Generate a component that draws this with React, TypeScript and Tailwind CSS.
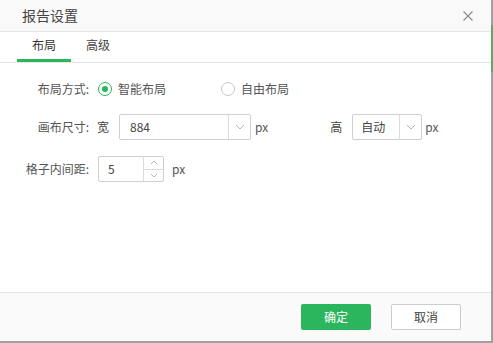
import React from 'react';

const font = { fontFamily: '"Noto Sans CJK SC", "Noto Sans", sans-serif' };

const Chevron = () => (
  <svg width="10" height="6" viewBox="0 0 10 6" fill="none" stroke="#b5b5b5" strokeWidth="1">
    <path d="M1 1l4 4 4-4" />
  </svg>
);

const Radio = ({ checked }: { checked?: boolean }) => (
  <span
    className={
      'flex h-[14px] w-[14px] items-center justify-center rounded-full border ' +
      (checked ? 'border-[#2bb55d]' : 'border-[#c8c8c8]')
    }
  >
    {checked && <span className="h-[6px] w-[6px] rounded-full bg-[#2bb55d]" />}
  </span>
);

export default function App() {
  return (
    <div className="flex h-[343px] w-[493px] flex-col bg-white text-[12px] text-[#555]" style={font}>
      <div className="flex flex-1">
        <div className="flex w-[491px] flex-col">
          {/* header */}
          <div className="flex h-[32px] items-center justify-between border-b border-[#e6e6e6] bg-[#f9f9f9] pl-[22px] pr-[18px]">
            <span className="text-[14px] text-[#444]">报告设置</span>
            <svg width="10" height="10" viewBox="0 0 10 10" stroke="#8a8a8a" strokeWidth="1.1">
              <path d="M0.5 0.5l9 9M9.5 0.5l-9 9" />
            </svg>
          </div>

          {/* tabs */}
          <div className="flex h-[31px] border-b border-[#e6e6e6] pl-[17px]">
            <div className="flex w-[54px] flex-col items-center">
              <span className="flex flex-1 items-center pb-[1px] text-[12px] text-[#333]">布局</span>
              <span className="h-[3px] w-full bg-[#2bb55d]" />
            </div>
            <div className="flex w-[54px] items-center justify-center pb-[4px] text-[12px] text-[#444]">高级</div>
          </div>

          {/* body */}
          <div className="flex flex-1 flex-col pt-[14px]">
            <div className="flex h-[24px] items-center">
              <span className="w-[89px] text-right">布局方式:</span>
              <div className="ml-[9px] flex items-center gap-[6px]">
                <Radio checked />
                <span>智能布局</span>
              </div>
              <div className="ml-[55px] flex items-center gap-[6px]">
                <Radio />
                <span>自由布局</span>
              </div>
            </div>

            <div className="mt-[13px] flex h-[26px] items-center">
              <span className="w-[89px] text-right">画布尺寸:</span>
              <span className="ml-[8px] text-[#444]">宽</span>
              <div className="ml-[10px] flex h-[26px] w-[132px] rounded-[2px] border border-[#cfcfcf]">
                <span className="flex flex-1 items-center pl-[10px] text-[#444]">884</span>
                <span className="flex w-[22px] items-center justify-center border-l border-[#dcdcdc]">
                  <Chevron />
                </span>
              </div>
              <span className="ml-[4px]">px</span>
              <span className="ml-[62px] text-[#444]">高</span>
              <div className="ml-[10px] flex h-[26px] w-[70px] rounded-[2px] border border-[#cfcfcf]">
                <span className="flex flex-1 items-center pl-[8px] text-[#444]">自动</span>
                <span className="flex w-[22px] items-center justify-center border-l border-[#dcdcdc]">
                  <Chevron />
                </span>
              </div>
              <span className="ml-[3px]">px</span>
            </div>

            <div className="mt-[16px] flex h-[26px] items-center">
              <span className="w-[89px] text-right">格子内间距:</span>
              <div className="ml-[9px] flex h-[26px] w-[66px] rounded-[2px] border border-[#cfcfcf]">
                <span className="flex flex-1 items-center pl-[9px] text-[#444]">5</span>
                <span className="flex w-[20px] flex-col border-l border-[#dcdcdc]">
                  <span className="flex flex-1 items-center justify-center border-b border-[#dcdcdc]">
                    <svg width="8" height="5" viewBox="0 0 8 5" fill="none" stroke="#b5b5b5" strokeWidth="1">
                      <path d="M1 4l3-3 3 3" />
                    </svg>
                  </span>
                  <span className="flex flex-1 items-center justify-center">
                    <svg width="8" height="5" viewBox="0 0 8 5" fill="none" stroke="#b5b5b5" strokeWidth="1">
                      <path d="M1 1l3 3 3-3" />
                    </svg>
                  </span>
                </span>
              </div>
              <span className="ml-[8px]">px</span>
            </div>
          </div>

          {/* footer */}
          <div className="flex h-[49px] items-center justify-end gap-[20px] border-t border-[#e6e6e6] bg-[#fafafa] pr-[30px]">
            <button className="h-[26px] w-[70px] rounded-[2px] bg-[#2bb55d] text-[12px] text-white">确定</button>
            <button className="h-[26px] w-[70px] rounded-[2px] border border-[#cccccc] bg-white text-[12px] text-[#444]">
              取消
            </button>
          </div>
        </div>

        {/* right edge */}
        <div className="flex w-[2px] flex-col bg-[#a0a0a0]">
          <span className="mt-[25px] h-[47px] bg-[#5fa86a]" />
        </div>
      </div>
      <div className="h-[2px] bg-[#a0a0a0]" />
    </div>
  );
}
